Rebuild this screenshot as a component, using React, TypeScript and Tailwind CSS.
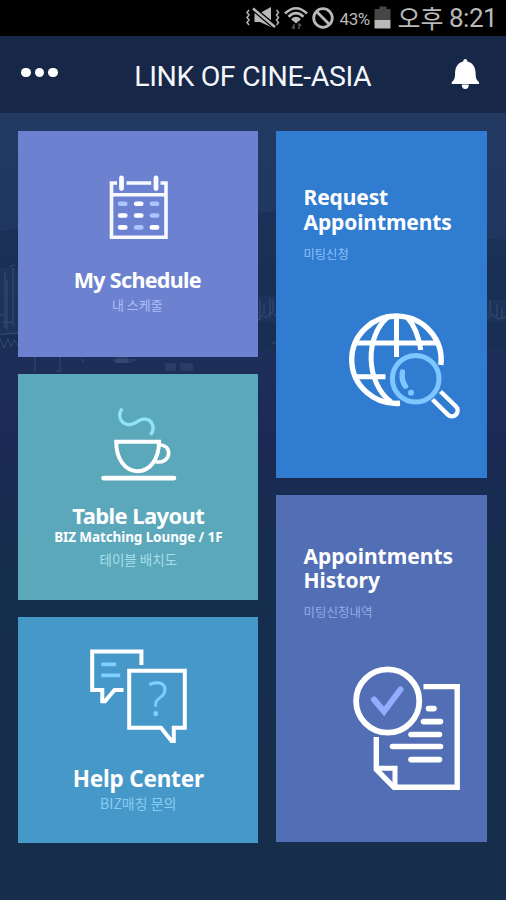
import type { ReactNode } from "react";

const KR = "font-['Noto_Sans_CJK_KR','Noto_Sans',sans-serif]";

function Scenery() {
  return (
    <svg className="absolute inset-0 h-full w-full" viewBox="0 113 506 787" fill="none" preserveAspectRatio="none">
      <defs>
        <linearGradient id="night" x1="0" y1="0" x2="0" y2="1">
          <stop offset="0" stopColor="#223a62" />
          <stop offset="0.14" stopColor="#20375f" />
          <stop offset="0.3" stopColor="#1d2f59" />
          <stop offset="0.42" stopColor="#1b2a54" />
          <stop offset="0.5" stopColor="#182c50" />
          <stop offset="0.58" stopColor="#162e4d" />
          <stop offset="1" stopColor="#162d4c" />
        </linearGradient>
      </defs>
      <path d="M0 113H506V900H0Z" fill="url(#night)" />
      <path d="M0 231L18 229L258 213L276 211L487 238L506 240V350H0Z" fill="#182b4f" opacity="0.55" />
      <path d="M0 268H18V334H0ZM258 296H276V322H258ZM487 300H506V322H487Z" fill="#263c64" opacity="0.4" />
      <g stroke="#7089ac" strokeWidth="1" opacity="0.32">
        <path d="M0 334.500L18 333M0 338L4 348L8 339L11 347L14 340L18 346M5 272V328M7 280V330M13 268V326M9 267L15 265M0 315H4M2 322H12" />
        <path d="M258 320L263 315L266 318L271 312L276 316M260 300V320M264 304V314M270 298V318M273 300V312M272 343H276" />
        <path d="M487 318L492 314L498 319L506 317M490 300V314M497 304V317M502 308V318" />
        <path d="M35 357V371M60 357V370M56 371H62M81 359L84 362M112 360H136M114 362H132" />
      </g>
      <path d="M165 363H176V371H165ZM180 363H193V371H180ZM116 357H128V363H116Z" fill="#5c7397" opacity="0.22" />
    </svg>
  );
}

function CalendarIcon() {
  const dashes = [
    [122.7, 203.7, 1], [138.7, 203.7, 0], [154.5, 203.7, 1],
    [122.7, 215.5, 0], [138.7, 215.5, 0], [154.5, 215.5, 1],
    [122.7, 227.4, 0], [138.7, 227.4, 1], [154.5, 227.4, 0],
  ];
  return (
    <svg className="ml-px" width="62" height="66" viewBox="108 175 62 66" fill="none" stroke="#f7f9ff" strokeWidth="3.6">
      <path d="M117 183H111.500V237.200H166V183H160.500M126.500 183H151.200M111.500 194.700H166" />
      <path d="M121.500 178V188.500M156 178V188.500" strokeWidth="4.800" strokeLinecap="round" />
      {dashes.map(([x, y, soft], i) => (
        <path key={i} d={`M${x - 2.6} ${y}h5.2`} stroke={soft ? "#a9c6ff" : "#fff"} strokeWidth="4.6" strokeLinecap="round" />
      ))}
    </svg>
  );
}

function CupIcon() {
  return (
    <svg className="ml-[2px]" width="78" height="78" viewBox="100 404 78 78" fill="none" stroke="#fff" strokeWidth="4">
      <path d="M122 408.500C116.500 417 122 424.700 129.500 424.700C136.500 424.700 138 419 144 419C152 419 156 428 150.500 434.800" stroke="#8fe4fb" strokeWidth="3.400" />
      <path d="M116.200 441.800H159C159 459 150 471.200 137.500 471.200C125 471.200 116.200 459 116.200 441.800Z" />
      <path d="M158.500 444.700C165 444.700 168.700 448.500 168.700 453.300C168.700 459 163 463 155.500 461.800" strokeWidth="3.600" />
      <path d="M103.500 478.100H174" strokeWidth="4.600" strokeLinecap="round" />
    </svg>
  );
}

function ChatIcon() {
  return (
    <svg className="ml-[2px]" width="100" height="96" viewBox="89 648 100 96" fill="none" stroke="#fff" strokeWidth="4">
      <path d="M141.400 665V651.500H92.200V690H102.300V701.200H105L114.500 690H123.500" />
      <path d="M129.200 670.800H184.800V727.800H173.800V741H171.500L161 727.800H129.200Z" />
      <path d="M101.300 664.400H116.200M101.300 675.300H120.200" stroke="#7fcfff" strokeWidth="3.800" />
      <text x="157.800" y="715.500" textAnchor="middle" className="font-['Noto_Sans'] text-[47px] font-light" fill="#7fcfff" stroke="#7fcfff" strokeWidth="0.400">?</text>
    </svg>
  );
}

function GlobeIcon() {
  return (
    <svg width="116" height="110" viewBox="347 311 116 110" fill="none" stroke="#fff" strokeWidth="5.4">
      <path d="M440.800 365A44.700 43.700 0 1 0 400 403.300" />
      <path d="M396.500 316V357M355 343H438M353 376.800H385.500" strokeWidth="5" />
      <path d="M388 317C365 336 365 382 391 402M407 317C415 326 419 338 420.800 350" strokeWidth="5" />
      <path d="M440.500 391.500L456 406.500A5.800 5.800 0 0 1 447.800 414.700L432.500 399.500" strokeWidth="4.400" />
      <circle cx="415.700" cy="378.700" r="26.500" fill="#307cd1" stroke="none" />
      <circle cx="415.700" cy="378.700" r="23.300" stroke="#7ec6ff" strokeWidth="5" />
      <path d="M402.400 372Q401.200 381 405.500 386.200" stroke="#7ec6ff" strokeLinecap="round" />
      <circle cx="411" cy="392.700" r="3" fill="#7ec6ff" stroke="none" />
    </svg>
  );
}

function HistoryIcon() {
  return (
    <svg width="110" height="126" viewBox="352 666 110 126" fill="none" stroke="#fff" strokeWidth="6">
      <circle cx="387.700" cy="701" r="31.600" strokeWidth="5.800" />
      <path d="M374 699.500L384 711.500L400.500 689.500" stroke="#92adfb" strokeLinecap="round" />
      <path d="M423.500 686.600H457.200V787.300H394L376.300 769.500V737" strokeWidth="5.400" />
      <path d="M376.300 768.200H395V787" strokeWidth="5" />
      <path d="M428.500 708.600H434M423.500 721.600H440.500M411 734.500H439.500M392.500 746.500H440.500M411 759.600H439.500" strokeWidth="5.600" strokeLinecap="round" />
    </svg>
  );
}

function StatusBar() {
  return (
    <div className="flex h-9 items-center justify-end bg-black pr-[11px] text-[#b9b9b9]">
      <svg height="36" viewBox="244 0 92 36" className="w-[92px]" fill="none" stroke="#b9b9b9">
        <path d="M249 10l-2 2.500 2 2.500-2 2.500 2 2.500-2 2.500 2 2.500M276.500 10l2 2.500-2 2.500 2 2.500-2 2.500 2 2.500-2 2.500" strokeWidth="1.500" />
        <path d="M254.500 13H260L271 7V27L260 22H254.500Z" fill="#b9b9b9" stroke="none" />
        <path d="M253 8.500L275 27" stroke="#000" strokeWidth="5" />
        <path d="M253 8.500L275 27" strokeWidth="2.600" />
        <path d="M285 13.500Q296 3 307 13.500M288.500 16.800Q296 9.500 303.500 16.800M292 20Q296 16.400 300 20" strokeWidth="2.600" />
        <path d="M292.500 20.200L296 17.800L299.500 20.200L296 23.500Z" fill="#b9b9b9" stroke="none" />
        <path d="M294 24V29M292 26.500L294 29M299 29V23.500M301 26L299 23.500" stroke="#555" strokeWidth="1.500" />
        <circle cx="323" cy="18" r="9.300" strokeWidth="2.800" />
        <path d="M316.500 11.500L329.500 24.500" strokeWidth="2.800" />
      </svg>
      <span className="w-[37.500px] whitespace-nowrap pl-[3px] pt-[2px] font-['Roboto'] text-[17px] leading-5 tracking-[-0.400px]">43%</span>
      <svg width="17" height="36" viewBox="373.500 0 17 36">
        <path d="M379 6.500H386V9H390V20H374V9H379Z" fill="#464646" />
        <path d="M374 20H390V28.500H374Z" fill="#b9b9b9" />
      </svg>
      <span className="ml-[6.500px] whitespace-nowrap pb-[2px] font-['Noto_Sans_CJK_KR',sans-serif] text-[25px] leading-8">오후</span>
      <span className="ml-[5.500px] w-[46px] whitespace-nowrap font-['Roboto'] text-[26px] leading-8 tracking-[-0.500px]">8:21</span>
    </div>
  );
}

function Header() {
  return (
    <header className="flex h-[77px] items-center justify-between bg-[#162747] pl-[21px] pr-[26px]">
      <div className="flex gap-[4px] pb-[4px]">
        <span className="size-[9.500px] rounded-full bg-white" />
        <span className="size-[9.500px] rounded-full bg-white" />
        <span className="size-[9.500px] rounded-full bg-white" />
      </div>
      <h1 className="whitespace-nowrap pr-[3px] pt-[5px] font-['Roboto'] text-[28.500px] leading-9 tracking-[-0.380px] text-[#f4f6fb]">LINK OF CINE-ASIA</h1>
      <svg width="29" height="34" viewBox="451 58 29 34" fill="#fff">
        <path d="M465.300 59C466.500 59 467.300 60 467.500 61.600C473 63 475.500 67.500 475.600 73C475.700 78 476.300 80 479 82V84H451.700V82C454.500 80 455 78 455.100 73C455.200 67.500 457.600 63 463.100 61.600C463.300 60 464.100 59 465.300 59Z" />
        <path d="M461.800 84.500H468.800A3.500 4.500 0 0 1 461.800 84.500Z" />
      </svg>
    </header>
  );
}

function Card({ className, children }: { className: string; children: ReactNode }) {
  return <section className={`flex flex-col ${className}`}>{children}</section>;
}

const title = "whitespace-nowrap font-['Noto_Sans',sans-serif] font-bold text-white";

export default function App() {
  return (
    <div className="flex h-[900px] w-[506px] flex-col overflow-hidden">
      <StatusBar />
      <Header />
      <main className="relative flex-1">
        <Scenery />
        <div className="relative flex items-start gap-[17.700px] pl-[18.300px] pt-[18px]">
          <div className="flex w-[240px] flex-col gap-[17.500px]">
            <Card className="h-[225.500px] items-center bg-[#6c82d0] pt-[44px]">
              <CalendarIcon />
              <h2 className={`${title} mt-[24px] pr-[2px] text-[21.500px] leading-[30px] tracking-[-0.700px]`}>My Schedule</h2>
              <p className={`${KR} mt-[1px] pr-[2px] text-[13px] leading-[18px] text-[#adbdf5]`}>내 스케줄</p>
            </Card>
            <Card className="h-[225.500px] items-center bg-[#5ba8bb] pt-[29.500px]">
              <CupIcon />
              <h2 className={`${title} mt-[18px] text-[22px] leading-[30px] tracking-[-0.600px]`}>Table Layout</h2>
              <p className={`${title} -mt-[1px] text-[13.500px] leading-[16px] tracking-[-0.100px]`}>BIZ Matching Lounge / 1F</p>
              <p className={`${KR} mt-[5px] text-[13.500px] leading-[18px] text-[#a6deea]`}>테이블 배치도</p>
            </Card>
            <Card className="h-[225.500px] items-center bg-[#4698c9] pt-[30.500px]">
              <ChatIcon />
              <h2 className={`${title} mt-[20px] text-[22.500px] leading-[30px] tracking-[-0.200px]`}>Help Center</h2>
              <p className={`${KR} text-[14px] leading-[18px] text-[#8accf2]`}>BIZ매칭 문의</p>
            </Card>
          </div>
          <div className="flex w-[211.500px] flex-col gap-[17.500px]">
            <Card className="h-[346.500px] bg-[#307cd1] pl-[27.500px] pt-[54px]">
              <h2 className={`${title} text-[21px] leading-[25px] tracking-[-0.120px]`}>Request<br />Appointments</h2>
              <p className={`${KR} mt-[9.500px] text-[12.300px] leading-[18px] text-[#8fc0f5]`}>미팅신청</p>
              <div className="mt-[48.500px] pl-[43.500px]"><GlobeIcon /></div>
            </Card>
            <Card className="h-[346.500px] bg-[#526fb5] pl-[27.500px] pt-[49px]">
              <h2 className={`${title} text-[21px] leading-[24px]`}>Appointments<br />History</h2>
              <p className={`${KR} mt-[11px] text-[12.500px] leading-[18px] text-[#95abe4]`}>미팅신청내역</p>
              <div className="mt-[44.500px] pl-[48.500px]"><HistoryIcon /></div>
            </Card>
          </div>
        </div>
      </main>
    </div>
  );
}
